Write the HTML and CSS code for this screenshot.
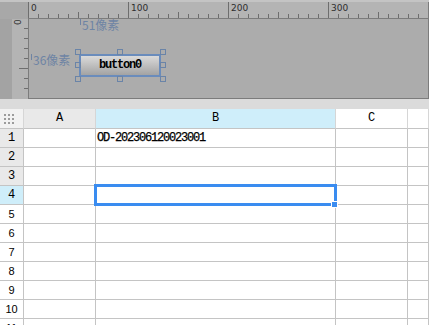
FILE: index.html
```html
<!DOCTYPE html>
<html lang="zh">
<head>
    <meta charset="UTF-8">
    <title>表单设计</title>
    <link rel="stylesheet" href="styles.css">
</head>
<body>
    <!-- 设计区：标尺 + 画布 -->
    <div class="designer">
        <div class="designer-top"></div>
        <div class="ruler-row">
            <div class="ruler-corner"></div>
            <div class="ruler-h">
                <svg width="400" height="16" viewBox="0 0 400 16">
                    <path stroke="#6e6e6e" stroke-width="1" fill="none"
                          d="M0.5 0V16M100.5 0V16M200.5 0V16M300.5 0V16
                             M50.5 10V16M150.5 10V16M250.5 10V16M350.5 10V16
                             M10.5 12V16M20.5 12V16M30.5 12V16M40.5 12V16M60.5 12V16M70.5 12V16M80.5 12V16M90.5 12V16
                             M110.5 12V16M120.5 12V16M130.5 12V16M140.5 12V16M160.5 12V16M170.5 12V16M180.5 12V16M190.5 12V16
                             M210.5 12V16M220.5 12V16M230.5 12V16M240.5 12V16M260.5 12V16M270.5 12V16M280.5 12V16M290.5 12V16
                             M310.5 12V16M320.5 12V16M330.5 12V16M340.5 12V16M360.5 12V16M370.5 12V16M380.5 12V16M390.5 12V16"/>
                    <g class="ruler-label">
                        <text x="3" y="9">0</text>
                        <text x="103" y="9">100</text>
                        <text x="203" y="9">200</text>
                        <text x="303" y="9">300</text>
                    </g>
                </svg>
            </div>
        </div>
        <div class="canvas-row">
            <div class="side-strip"></div>
            <div class="ruler-v">
                <svg width="16" height="79" viewBox="0 0 16 79">
                    <path stroke="#6e6e6e" stroke-width="1" fill="none"
                          d="M12 9.5H16M12 19.5H16M12 29.5H16M12 39.5H16M7 49.5H16M12 59.5H16M12 69.5H16"/>
                    <text class="ruler-label" transform="translate(9 6) rotate(-90)">0</text>
                </svg>
            </div>
            <div class="canvas">
                <!-- 距离提示 -->
                <div class="guide guide-x">
                    <span class="guide-tick"></span>
                    <span class="guide-text">51像素</span>
                </div>
                <div class="guide guide-y">
                    <span class="guide-tick"></span>
                    <span class="guide-text">36像素</span>
                </div>

                <!-- 选中的控件 -->
                <div class="widget">
                    <div class="widget-button">button0</div>
                    <span class="handle h-tl"></span>
                    <span class="handle h-tc"></span>
                    <span class="handle h-tr"></span>
                    <span class="handle h-ml"></span>
                    <span class="handle h-mr"></span>
                    <span class="handle h-bl"></span>
                    <span class="handle h-bc"></span>
                    <span class="handle h-br"></span>
                </div>
            </div>
        </div>
    </div>

    <div class="divider"></div>

    <!-- 表格区 -->
    <div class="sheet">
        <div class="cell head corner">
            <svg width="10" height="10" viewBox="0 0 10 10" fill="#9c9c9c">
                <rect x="0" y="0" width="2" height="2"/><rect x="4" y="0" width="2" height="2"/><rect x="8" y="0" width="2" height="2"/>
                <rect x="0" y="4" width="2" height="2"/><rect x="4" y="4" width="2" height="2"/><rect x="8" y="4" width="2" height="2"/>
                <rect x="0" y="8" width="2" height="2"/><rect x="4" y="8" width="2" height="2"/><rect x="8" y="8" width="2" height="2"/>
            </svg>
        </div>
        <div class="cell head col-head">A</div>
        <div class="cell head col-head active">B</div>
        <div class="cell head col-head blank">C</div>
        <div class="cell head col-head blank"></div>

        <div class="cell row-head">1</div>
        <div class="cell"></div>
        <div class="cell value">OD-202306120023001</div>
        <div class="cell"></div>
        <div class="cell"></div>

        <div class="cell row-head">2</div>
        <div class="cell"></div><div class="cell"></div><div class="cell"></div><div class="cell"></div>

        <div class="cell row-head">3</div>
        <div class="cell"></div><div class="cell"></div><div class="cell"></div><div class="cell"></div>

        <div class="cell row-head active">4</div>
        <div class="cell"></div><div class="cell selected"></div><div class="cell"></div><div class="cell"></div>

        <div class="cell row-head plain">5</div>
        <div class="cell"></div><div class="cell"></div><div class="cell"></div><div class="cell"></div>

        <div class="cell row-head plain">6</div>
        <div class="cell"></div><div class="cell"></div><div class="cell"></div><div class="cell"></div>

        <div class="cell row-head plain">7</div>
        <div class="cell"></div><div class="cell"></div><div class="cell"></div><div class="cell"></div>

        <div class="cell row-head plain">8</div>
        <div class="cell"></div><div class="cell"></div><div class="cell"></div><div class="cell"></div>

        <div class="cell row-head plain">9</div>
        <div class="cell"></div><div class="cell"></div><div class="cell"></div><div class="cell"></div>

        <div class="cell row-head plain">10</div>
        <div class="cell"></div><div class="cell"></div><div class="cell"></div><div class="cell"></div>

        <div class="cell row-head plain">11</div>
        <div class="cell"></div><div class="cell"></div><div class="cell"></div><div class="cell"></div>
    </div>
</body>
</html>
```

FILE: styles.css
```css
*,
*::before,
*::after {
    box-sizing: border-box;
}

body {
    margin: 0;
    width: 429px;
    height: 325px;
    overflow: hidden;
    background: #fff;
    font-family: "Liberation Mono", monospace;
}

/* 设计区 */
.designer {
    background: #a8a8a8;
}

.designer-top {
    height: 2px;
    background: #c4c4c4;
}

.ruler-row {
    display: flex;
    height: 17px;
}

.ruler-corner {
    width: 28px;
}

.ruler-h {
    flex: 1;
    background: #b4b4b4;
    border-bottom: 1px solid #7c7c7c;
    border-right: 1px solid #7c7c7c;
}

.ruler-h svg,
.ruler-v svg {
    display: block;
}

.ruler-label {
    font-family: "DejaVu Sans", sans-serif;
    font-size: 9px;
    fill: #2e2e2e;
}

.canvas-row {
    display: flex;
    height: 80px;
}

.side-strip {
    width: 12px;
    background: #a3a3a3;
}

.ruler-v {
    width: 17px;
    background: #b4b4b4;
    border-right: 1px solid #7c7c7c;
}

/* 画布：控件按坐标摆放 */
.canvas {
    flex: 1;
    position: relative;
    background: #acacac;
    border-right: 1px solid #7c7c7c;
    border-bottom: 1px solid #7c7c7c;
}

.guide {
    position: absolute;
    display: flex;
    align-items: flex-start;
    gap: 1px;
    color: #6e84a4;
}

.guide-x {
    left: 51px;
    top: 0;
}

.guide-y {
    left: 2px;
    top: 35px;
}

.guide-tick {
    width: 1px;
    height: 6px;
    background: #6e84a4;
}

.guide-text {
    font-family: "Noto Sans CJK SC", sans-serif;
    font-size: 12px;
    line-height: 12px;
}

.widget {
    position: absolute;
    left: 49px;
    top: 33px;
    width: 85px;
    height: 27px;
    padding: 2px 0 0 1px;
}

.widget-button {
    width: 82px;
    height: 23px;
    border: 2px solid #6a8cbc;
    background: linear-gradient(#dadada, #a3a3a3);
    font-family: "Liberation Mono", monospace;
    font-weight: bold;
    font-size: 12px;
    letter-spacing: -1.2px;
    line-height: 19px;
    text-align: center;
    color: #000;
}

.handle {
    position: absolute;
    width: 6px;
    height: 6px;
    border: 1px solid #6a84a8;
}

.h-tl { left: -3px; top: -3px; }
.h-tc { left: 39px; top: -3px; }
.h-tr { left: 82px; top: -3px; }
.h-ml { left: -3px; top: 10px; }
.h-mr { left: 82px; top: 10px; }
.h-bl { left: -3px; top: 24px; }
.h-bc { left: 39px; top: 24px; }
.h-br { left: 82px; top: 24px; }

.divider {
    height: 10px;
    background: #dbdbdb;
}

/* 表格 */
.sheet {
    display: grid;
    grid-template-columns: 24px 72px 240px 72px 1fr;
    grid-template-rows: 20px;
    grid-auto-rows: 19px;
}

.cell {
    border-right: 1px solid #c4c4c4;
    border-bottom: 1px solid #c4c4c4;
    font-size: 12px;
    line-height: 18px;
    color: #000;
    white-space: nowrap;
}

.head {
    line-height: 19px;
    text-align: center;
    background: #e9e9e9;
    border-right-color: #d6d6d6;
}

.corner {
    background: #f2f2f2;
    display: flex;
    align-items: center;
    padding-left: 4px;
    padding-top: 1px;
}

.col-head.active,
.row-head.active {
    background: #cfeefa;
}

.col-head.blank {
    background: #fff;
}

.row-head {
    text-align: center;
    background: #e9e9e9;
}

.row-head.plain {
    background: #fff;
    font-family: "Liberation Sans", sans-serif;
    font-size: 11px;
}

.value {
    padding-left: 1px;
    letter-spacing: -1.2px;
    -webkit-text-stroke: 0.25px #000;
}

/* 当前选中单元格 */
.selected {
    position: relative;
}

.selected::before {
    content: "";
    position: absolute;
    left: -2px;
    top: -2px;
    width: 243px;
    height: 22px;
    border: 3px solid #3a8cf0;
}

.selected::after {
    content: "";
    position: absolute;
    left: 235px;
    top: 15px;
    width: 7px;
    height: 7px;
    background: #3a8cf0;
    border: 1px solid #fff;
}
```
